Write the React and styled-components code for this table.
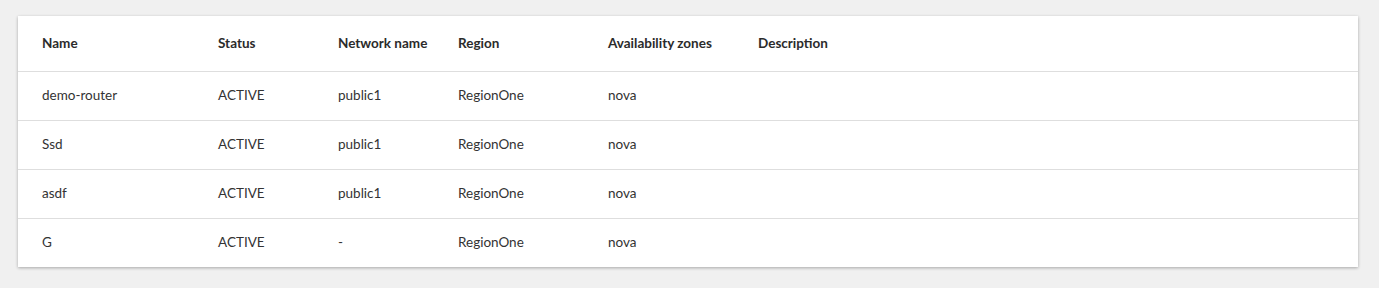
import React from "react";
import styled, { createGlobalStyle } from "styled-components";

const GlobalStyle = createGlobalStyle`
  body {
    margin: 0;
    background: #f0f0f0;
    font-family: Lato, "Open Sans", sans-serif;
    color: #333;
  }
`;

const Page = styled.div`
  padding: 16px 21px 21px 18px;
`;

const Card = styled.div`
  background: #fff;
  box-shadow: 0 1px 3px rgba(0, 0, 0, 0.3);
`;

const Table = styled.table`
  width: 100%;
  border-collapse: collapse;
  font-size: 13.5px;
`;

const Th = styled.th`
  text-align: left;
  font-weight: 700;
  color: #2b2b2b;
  height: 53px;
  padding: 0 0 2px ${(p) => (p.$first ? 24 : 0)}px;
  width: ${(p) => (p.$w ? `${p.$w}px` : "auto")};
  border-bottom: 1px solid #dedede;
`;

const Row = styled.tr`
  & + & td {
    border-top: 1px solid #dedede;
  }
`;

const Td = styled.td`
  height: 46px;
  padding: 0 0 2px ${(p) => (p.$first ? 24 : 0)}px;
  color: #333;
`;

const columns = [
  { key: "name", label: "Name", w: 176 },
  { key: "status", label: "Status", w: 120 },
  { key: "network", label: "Network name", w: 120 },
  { key: "region", label: "Region", w: 150 },
  { key: "zones", label: "Availability zones", w: 150 },
  { key: "description", label: "Description" },
];

const routers = [
  { name: "demo-router", status: "ACTIVE", network: "public1", region: "RegionOne", zones: "nova", description: "" },
  { name: "Ssd", status: "ACTIVE", network: "public1", region: "RegionOne", zones: "nova", description: "" },
  { name: "asdf", status: "ACTIVE", network: "public1", region: "RegionOne", zones: "nova", description: "" },
  { name: "G", status: "ACTIVE", network: "-", region: "RegionOne", zones: "nova", description: "" },
];

export default function App() {
  return (
    <>
      <GlobalStyle />
      <Page>
        <Card>
          <Table>
            <thead>
              <tr>
                {columns.map((c, i) => (
                  <Th key={c.key} $w={c.w} $first={i === 0}>
                    {c.label}
                  </Th>
                ))}
              </tr>
            </thead>
            <tbody>
              {routers.map((r) => (
                <Row key={r.name}>
                  {columns.map((c, i) => (
                    <Td key={c.key} $first={i === 0}>
                      {r[c.key]}
                    </Td>
                  ))}
                </Row>
              ))}
            </tbody>
          </Table>
        </Card>
      </Page>
    </>
  );
}
